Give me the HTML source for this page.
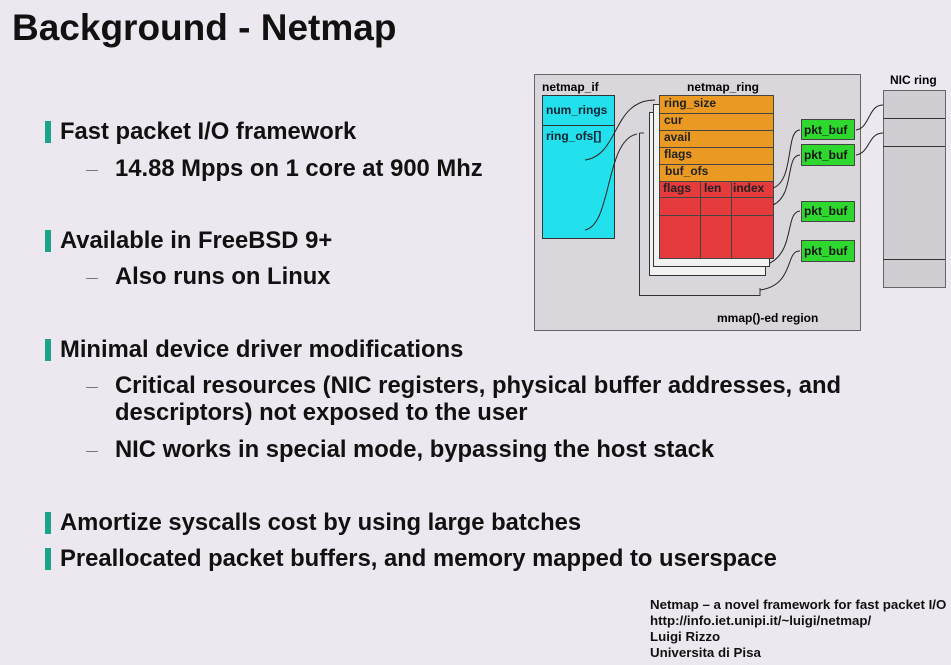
<!DOCTYPE html>
<html><head><meta charset="utf-8"><style>
html,body{margin:0;padding:0}
body{width:951px;height:665px;background:#ede8ef;position:relative;overflow:hidden;font-family:"Liberation Sans",sans-serif;font-weight:bold;color:#111}
.t{position:absolute;white-space:nowrap}
.h{left:12px;top:7px;font-size:37px}
.b{font-size:23.8px;left:60px}
.s{font-size:23.8px;left:115px}
.bar{position:absolute;left:45px;width:6px;height:22px;background:#1aa58a}
.d{position:absolute;left:86px;width:12px;height:1px;background:#777}
.f{font-size:13.3px;left:650px;line-height:16px}
</style></head><body>
<div class="t h">Background - Netmap</div>

<div class="bar" style="top:121px"></div><div class="t b" style="top:118px">Fast packet I/O framework</div>
<div class="d" style="top:170px"></div><div class="t s" style="top:155px">14.88 Mpps on 1 core at 900 Mhz</div>

<div class="bar" style="top:230px"></div><div class="t b" style="top:227px">Available in FreeBSD 9+</div>
<div class="d" style="top:278px"></div><div class="t s" style="top:263px">Also runs on Linux</div>

<div class="bar" style="top:339px"></div><div class="t b" style="top:336px">Minimal device driver modifications</div>
<div class="d" style="top:387px"></div><div class="t s" style="top:372px">Critical resources (NIC registers, physical buffer addresses, and</div>
<div class="t s" style="top:399px">descriptors) not exposed to the user</div>
<div class="d" style="top:451px"></div><div class="t s" style="top:436px">NIC works in special mode, bypassing the host stack</div>

<div class="bar" style="top:512px"></div><div class="t b" style="top:509px">Amortize syscalls cost by using large batches</div>
<div class="bar" style="top:548px"></div><div class="t b" style="top:545px">Preallocated packet buffers, and memory mapped to userspace</div>

<div class="t f" style="top:597px">Netmap – a novel framework for fast packet I/O<br>http://info.iet.unipi.it/~luigi/netmap/<br>Luigi Rizzo<br>Universita di Pisa</div>

<svg width="951" height="665" style="position:absolute;left:0;top:0" font-family="Liberation Sans, sans-serif" font-weight="bold" font-size="12">
<rect x="534.5" y="74.5" width="326" height="256" fill="#dad7dc" stroke="#666"/>
<text x="542" y="91">netmap_if</text>
<text x="687" y="91">netmap_ring</text>
<rect x="542.5" y="95.5" width="72" height="143" fill="#22e0ec" stroke="#333"/>
<line x1="542" y1="125.5" x2="614" y2="125.5" stroke="#333"/>
<text x="546" y="114" fill="#123">num_rings</text>
<text x="546" y="140" fill="#123">ring_ofs[]</text>
<g fill="none" stroke="#333">
<path d="M639.5 133 L644 133 M639.5 133 V295.5 H760 V288"/>
<rect x="649.5" y="112.5" width="116" height="163" fill="#f2f2f2"/>
<rect x="653.5" y="104.5" width="116" height="162" fill="#f2f2f2"/>
</g>
<rect x="659.5" y="95.5" width="114" height="86" fill="#ea9a22" stroke="#444"/>
<rect x="659.5" y="181.5" width="114" height="77" fill="#e53b3d" stroke="#444"/>
<g stroke="#444">
<line x1="659" y1="113.5" x2="773" y2="113.5"/><line x1="659" y1="130.5" x2="773" y2="130.5"/>
<line x1="659" y1="147.5" x2="773" y2="147.5"/><line x1="659" y1="164.5" x2="773" y2="164.5"/>
<line x1="659" y1="197.5" x2="773" y2="197.5"/><line x1="659" y1="215.5" x2="773" y2="215.5"/>
<line x1="700.5" y1="181" x2="700.5" y2="258"/><line x1="731.5" y1="181" x2="731.5" y2="258"/>
</g>
<g fill="#222">
<text x="664" y="107">ring_size</text><text x="664" y="124">cur</text><text x="664" y="141">avail</text>
<text x="664" y="158">flags</text><text x="665" y="175">buf_ofs</text>
<text x="663" y="192">flags</text><text x="704" y="192">len</text><text x="733" y="192">index</text>
</g>
<g fill="#2ed82e" stroke="#444">
<rect x="801.5" y="119.5" width="53" height="20"/><rect x="801.5" y="144.5" width="53" height="21"/>
<rect x="801.5" y="201.5" width="53" height="20"/><rect x="801.5" y="240.5" width="53" height="21"/>
</g>
<g fill="#111"><text x="804" y="134">pkt_buf</text><text x="804" y="159">pkt_buf</text><text x="804" y="215">pkt_buf</text><text x="804" y="255">pkt_buf</text></g>
<text x="890" y="84">NIC ring</text>
<rect x="883.5" y="90.5" width="62" height="197" fill="#d0ced3" stroke="#666"/>
<g stroke="#333"><line x1="883" y1="118.5" x2="945" y2="118.5"/><line x1="883" y1="146.5" x2="945" y2="146.5"/><line x1="883" y1="259.5" x2="945" y2="259.5"/></g>
<g fill="none" stroke="#222" stroke-width="1">
<path d="M585 160 C620 155 612 100 655 100"/>
<path d="M585 230 C612 225 605 140 637 134"/>
<path d="M773 188 C795 180 785 130 800 130"/>
<path d="M773 205 C795 195 785 155 800 155"/>
<path d="M770 263 C795 250 785 212 800 211"/>
<path d="M760 290 C795 285 785 250 800 251"/>
<path d="M883 105 C868 105 870 128 856 130"/>
<path d="M883 133 C868 133 870 153 856 155"/>
</g>
<text x="717" y="322" font-size="12">mmap()-ed region</text>
</svg>
</body></html>
